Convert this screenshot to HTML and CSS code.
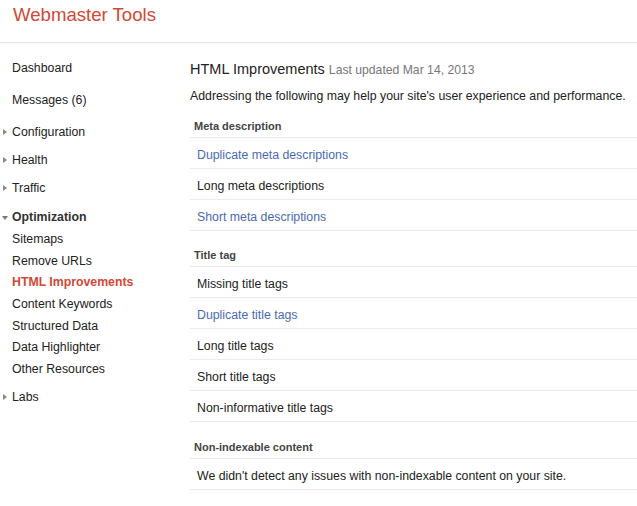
FILE: index.html
```html
<!DOCTYPE html>
<html>
<head>
<meta charset="utf-8">
<link rel="stylesheet" href="styles.css">
</head>
<body>
<header class="topbar">
  <div class="brand">Webmaster Tools</div>
</header>
<div class="layout">
  <nav class="sidebar">
    <div class="nav-main">Dashboard</div>
    <div class="nav-main">Messages (6)</div>
    <div class="nav-sec first"><span class="tri right"></span>Configuration</div>
    <div class="nav-sec"><span class="tri right"></span>Health</div>
    <div class="nav-sec"><span class="tri right"></span>Traffic</div>
    <div class="nav-open"><span class="tri down"></span>Optimization</div>
    <div class="nav-sub">Sitemaps</div>
    <div class="nav-sub">Remove URLs</div>
    <div class="nav-sub active">HTML Improvements</div>
    <div class="nav-sub">Content Keywords</div>
    <div class="nav-sub">Structured Data</div>
    <div class="nav-sub">Data Highlighter</div>
    <div class="nav-sub">Other Resources</div>
    <div class="nav-sec labs"><span class="tri right"></span>Labs</div>
  </nav>
  <main class="content">
    <h1 class="title">HTML Improvements <span class="updated">Last updated Mar 14, 2013</span></h1>
    <p class="intro">Addressing the following may help your site's user experience and performance.</p>

    <section class="group">
      <div class="group-head">Meta description</div>
      <div class="row link">Duplicate meta descriptions</div>
      <div class="row">Long meta descriptions</div>
      <div class="row link">Short meta descriptions</div>
    </section>

    <section class="group">
      <div class="group-head">Title tag</div>
      <div class="row">Missing title tags</div>
      <div class="row link">Duplicate title tags</div>
      <div class="row">Long title tags</div>
      <div class="row">Short title tags</div>
      <div class="row">Non-informative title tags</div>
    </section>

    <section class="group last">
      <div class="group-head">Non-indexable content</div>
      <div class="row">We didn't detect any issues with non-indexable content on your site.</div>
    </section>
  </main>
</div>
</body>
</html>
```
FILE: styles.css
```css
* { box-sizing: border-box; }
html, body { margin: 0; padding: 0; background: #fff; }
body {
  font-family: Arial, "Liberation Sans", sans-serif;
  font-size: 12.3px;
  color: #222;
  overflow: hidden;
}
.topbar {
  height: 43px;
  border-bottom: 1px solid #e8e8e8;
  box-shadow: 0 1px 1px rgba(0,0,0,0.03);
  padding-left: 13px;
}
.brand {
  font-size: 18.6px;
  line-height: 30px;
  color: #d14836;
}
.layout {
  display: flex;
}
.sidebar {
  width: 190px;
  flex: none;
  padding-top: 9px;
}
.nav-main {
  height: 32px;
  line-height: 32px;
  padding-left: 12px;
}
.nav-sec, .nav-open {
  position: relative;
  height: 28px;
  line-height: 28px;
  padding-left: 12px;
}
.nav-sec.first { margin-top: 2px; }
.nav-open {
  height: 23px;
  line-height: 22px;
  margin-top: 4px;
  font-weight: bold;
  color: #333;
}
.nav-sub {
  height: 21.7px;
  line-height: 21.7px;
  padding-left: 12px;
}
.nav-sub.active {
  color: #d14836;
  font-weight: bold;
}
.nav-sec.labs { margin-top: 2px; }
.tri {
  position: absolute;
  left: 3px;
  top: 50%;
  width: 0;
  height: 0;
}
.tri.right {
  margin-top: -3px;
  border-top: 3px solid transparent;
  border-bottom: 3px solid transparent;
  border-left: 4px solid #888;
}
.tri.down {
  left: 2px;
  margin-top: -2px;
  border-left: 3px solid transparent;
  border-right: 3px solid transparent;
  border-top: 4px solid #777;
}
.content {
  flex: 1;
  padding-top: 16px;
  min-width: 460px;
}
.title {
  margin: 0;
  font-size: 14.5px;
  font-weight: normal;
  line-height: 20px;
  color: #222;
}
.updated {
  font-size: 12.2px;
  color: #777;
}
.intro {
  margin: 8px 0 0;
  line-height: 16px;
  white-space: nowrap;
}
.group { margin-top: 11px; }
.group + .group { margin-top: 13px; }
.group.last { margin-top: 14px; }
.group-head {
  height: 23px;
  line-height: 22px;
  padding-left: 4px;
  font-size: 11px;
  font-weight: bold;
  color: #444;
  border-bottom: 1px solid #ebebeb;
}
.row {
  height: 31px;
  line-height: 28px;
  padding-top: 3px;
  padding-left: 7px;
  border-bottom: 1px solid #ebebeb;
  white-space: nowrap;
}
.row.link { color: #4a6bb3; }
```
